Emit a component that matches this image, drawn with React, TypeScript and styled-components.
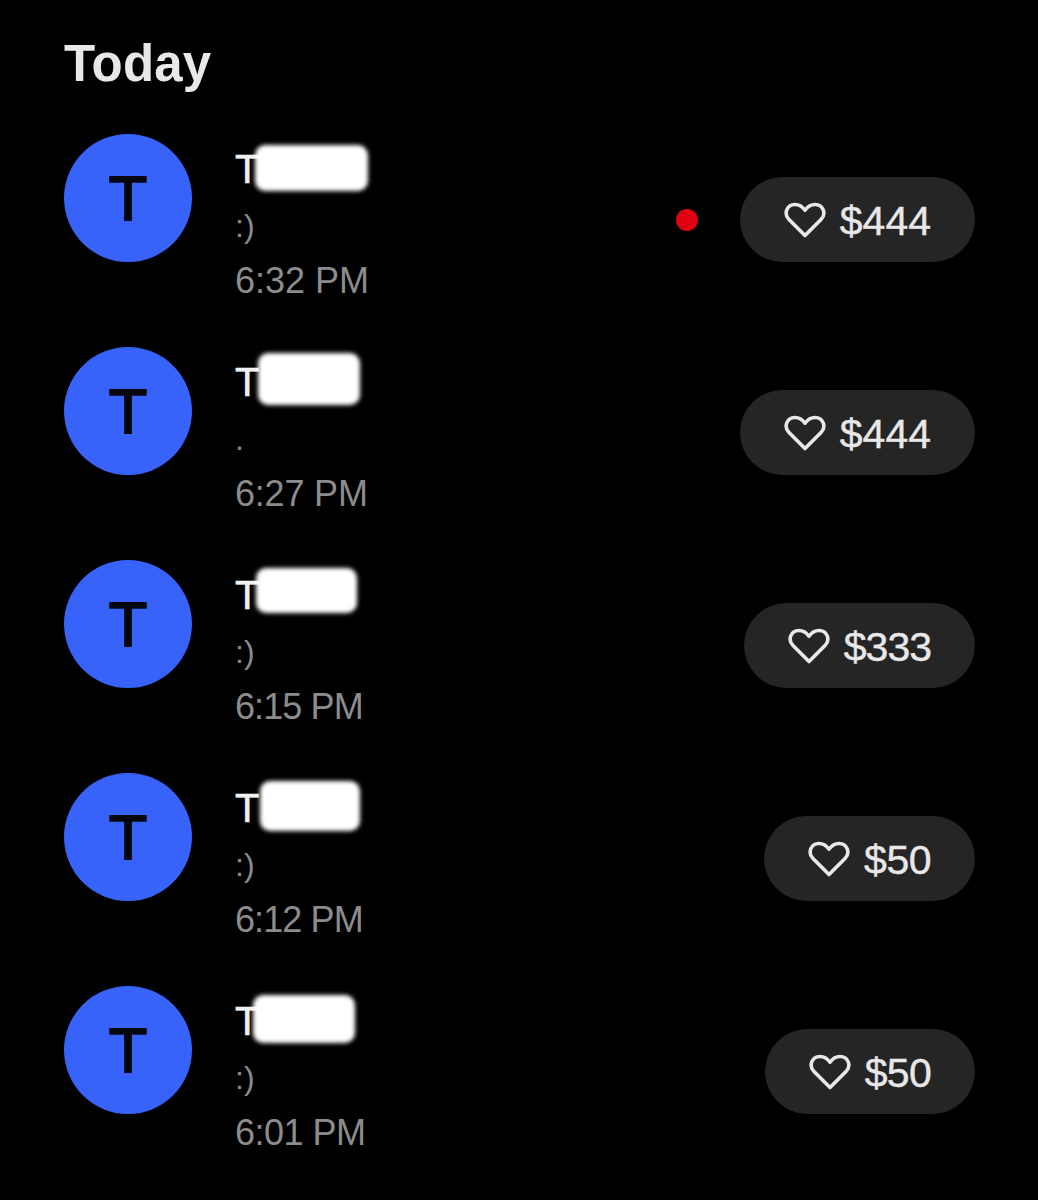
import styled, { createGlobalStyle } from "styled-components";

const Global = createGlobalStyle`
    html, body {
        margin: 0;
        padding: 0;
        background: #000;
    }
    body {
        font-family: "Liberation Sans", Arial, sans-serif;
    }
`;

const Page = styled.div`
    width: 1038px;
    height: 1200px;
    overflow: hidden;
    background: #000;
    box-sizing: border-box;
    padding: 35px 63px 0 64px;
`;

const Title = styled.h1`
    margin: 0 0 42px;
    font-size: 51px;
    line-height: 57px;
    letter-spacing: 0.2px;
    font-weight: 700;
    color: #e8e8e8;
`;

const List = styled.div`
    display: flex;
    flex-direction: column;
    gap: 85px;
`;

const Row = styled.div`
    display: flex;
    align-items: flex-start;
    height: 128px;
`;

const Avatar = styled.div`
    flex: none;
    width: 128px;
    height: 128px;
    border-radius: 50%;
    background: #3763fb;
    color: #06060f;
    font-size: 63px;
    line-height: 129px;
    text-align: center;
    -webkit-text-stroke: 2px #06060f;
`;

const Info = styled.div`
    position: relative;
    flex: 1;
    margin-left: 43px;
    padding-top: 12px;
`;

const Name = styled.div`
    font-size: 40px;
    line-height: 46px;
    color: #f0f0f0;
    -webkit-text-stroke: 0.6px #f0f0f0;
`;

const Message = styled.div`
    margin-top: 14px;
    font-size: 32px;
    line-height: 40px;
    color: #8a8a8a;
`;

const Time = styled.div<{ $spacing: number }>`
    margin-top: 14px;
    font-size: 36px;
    line-height: 42px;
    letter-spacing: ${(p) => p.$spacing}px;
    color: #8c8c8c;
`;

const Smudge = styled.div<{ $left: number; $top: number; $width: number; $height: number }>`
    position: absolute;
    left: ${(p) => p.$left}px;
    top: ${(p) => p.$top}px;
    width: ${(p) => p.$width}px;
    height: ${(p) => p.$height}px;
    background: #fff;
    border-radius: 10px;
    filter: blur(2px);
`;

const Side = styled.div`
    display: flex;
    align-items: center;
    gap: 42px;
    margin-top: 43px;
`;

const Dot = styled.div`
    width: 22px;
    height: 22px;
    border-radius: 50%;
    background: #e00012;
`;

const Pill = styled.div`
    display: flex;
    align-items: center;
    gap: 14px;
    height: 85px;
    padding: 0 44px;
    border-radius: 43px;
    background: #252525;
`;

const Amount = styled.span<{ $spacing: number }>`
    margin-top: 3px;
    color: #e8e8e8;
    font-size: 41px;
    letter-spacing: ${(p) => p.$spacing}px;
    -webkit-text-stroke: 0.4px #e8e8e8;
`;

const HeartIcon = () => (
    <svg width="42" height="36" viewBox="0 0 42 36" fill="none" stroke="#e8e8e8" strokeWidth="3.6" strokeLinejoin="round">
        <path d="M21 33.5 L5 17.5 C-0.5 12 2.5 2.5 11 2.5 C15.5 2.5 18.5 4.8 21 8.2 C23.5 4.8 26.5 2.5 31 2.5 C39.5 2.5 42.5 12 37 17.5 Z" />
    </svg>
);

const rows = [
    { message: ":)", time: "6:32 PM", timeSpacing: 0, amount: "$444", amountSpacing: 0, unread: true, smudge: [20, 11, 113, 46] },
    { message: ".", time: "6:27 PM", timeSpacing: -0.2, amount: "$444", amountSpacing: 0, unread: false, smudge: [23, 6, 102, 52] },
    { message: ":)", time: "6:15 PM", timeSpacing: -0.9, amount: "$333", amountSpacing: -1, unread: false, smudge: [21, 8, 101, 45] },
    { message: ":)", time: "6:12 PM", timeSpacing: -0.9, amount: "$50", amountSpacing: -0.5, unread: false, smudge: [25, 8, 100, 50] },
    { message: ":)", time: "6:01 PM", timeSpacing: -0.5, amount: "$50", amountSpacing: -0.7, unread: false, smudge: [18, 9, 102, 48] },
];

export default function App() {
    return (
        <Page>
            <Global />
            <Title>Today</Title>
            <List>
                {rows.map((row) => (
                    <Row key={row.time}>
                        <Avatar>T</Avatar>
                        <Info>
                            <Name>T</Name>
                            <Smudge
                                $left={row.smudge[0]}
                                $top={row.smudge[1]}
                                $width={row.smudge[2]}
                                $height={row.smudge[3]}
                            />
                            <Message>{row.message}</Message>
                            <Time $spacing={row.timeSpacing}>{row.time}</Time>
                        </Info>
                        <Side>
                            {row.unread && <Dot />}
                            <Pill>
                                <HeartIcon />
                                <Amount $spacing={row.amountSpacing}>{row.amount}</Amount>
                            </Pill>
                        </Side>
                    </Row>
                ))}
            </List>
        </Page>
    );
}
